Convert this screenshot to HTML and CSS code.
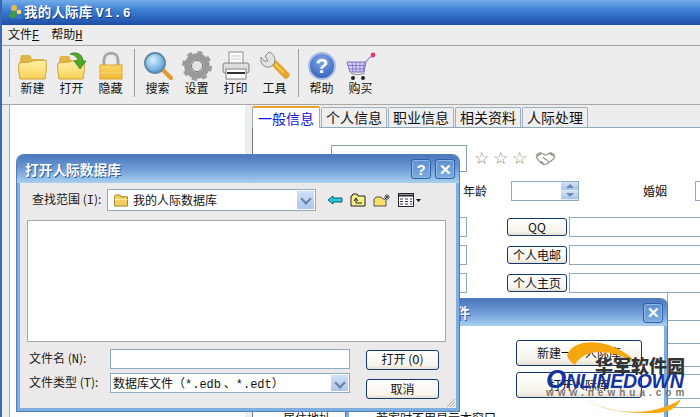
FILE: index.html
```html
<!DOCTYPE html>
<html lang="zh">
<head>
<meta charset="utf-8">
<title>我的人际库</title>
<link rel="stylesheet" href="styles.css">
</head>
<body>
<div class="screen">
  <header class="titlebar">
    <svg class="app-icon" viewBox="0 0 16 16" width="16" height="16"><circle cx="7" cy="4" r="3" fill="#e8b84a"/><path d="M2 14c0-5 2-7 5-7s4 2 4 4l-3 3z" fill="#3c9a48"/><circle cx="12" cy="8" r="2.4" fill="#f2d27a"/><path d="M8 15c0-3 2-5 4-5s3 2 3 5z" fill="#3f74c8"/></svg>
    <span class="app-title">我的人际库 <span class="mono">V1.6</span></span>
  </header>
  <nav class="menubar"><span>文件<u class="mono">F</u></span><span>帮助<u class="mono">H</u></span></nav>
  <div class="toolbar">
    <div class="sep"></div>
    <div class="tool"><svg viewBox="0 0 30 30" width="30" height="30"><path d="M2 8l1-4h9l2 4h12l1 2v4H2z" fill="#e2b646"/><path d="M2 28C1 22 0 16 1 12c6-1 10 0 14-2 4-1 9-1 13-.5 1 5 0 13-1 18.500z" fill="url(#fold)" stroke="#d0a236"/></svg><span>新建</span></div>
    <div class="tool"><svg viewBox="0 0 30 30" width="30" height="30"><path d="M2 9l1-4h9l2 4h10v6H2z" fill="#e2b646"/><path d="M2 28C1 22 0 16 1 12c6-1 10 0 14-2 4-1 8-1 12-.5 1 5 0 13-1 18.500z" fill="url(#fold)" stroke="#d0a236"/><path d="M13 3c6-3 13 0 13 7h3l-6 8-6-8h4c0-3-3-6-8-7z" fill="#4fa82e" stroke="#2f7d1e" stroke-width=".7"/></svg><span>打开</span></div>
    <div class="tool"><svg viewBox="0 0 30 30" width="30" height="30"><path d="M8 15V9c0-9 14-9 14 0v6" fill="none" stroke="#a8a8a8" stroke-width="3"/><rect x="4" y="14" width="22" height="14" fill="url(#lock)" stroke="#d9a632"/><path d="M4 22h22" stroke="#f8d674"/></svg><span>隐藏</span></div>
    <div class="sep"></div>
    <div class="tool"><svg viewBox="0 0 30 30" width="30" height="30"><path d="M19 18l9 9" stroke="#e39a2e" stroke-width="4" stroke-linecap="round"/><circle cx="12" cy="12" r="10" fill="url(#glass)" stroke="#5f8aa8" stroke-width="2"/></svg><span>搜索</span></div>
    <div class="tool"><svg viewBox="0 0 30 30" width="30" height="30"><circle cx="15" cy="15" r="9.500" fill="none" stroke="#999" stroke-width="6.500"/><circle cx="15" cy="15" r="13" fill="none" stroke="#9c9c9c" stroke-width="4" stroke-dasharray="5 5.200"/><circle cx="15" cy="15" r="5.500" fill="none" stroke="#6e6e6e"/><circle cx="15" cy="15" r="4.500" fill="#e4e4e4"/></svg><span>设置</span></div>
    <div class="tool"><svg viewBox="0 0 30 30" width="30" height="30"><rect x="8" y="1" width="14" height="13" fill="#fbfbfb" stroke="#8a8a8a"/><path d="M10 5h10M10 8h10" stroke="#ccc"/><rect x="2" y="12" width="26" height="10" rx="2" fill="#dedede" stroke="#808080"/><rect x="5" y="18" width="20" height="10" fill="#fff" stroke="#808080"/><rect x="6" y="21" width="18" height="2" fill="#333"/></svg><span>打印</span></div>
    <div class="tool"><svg viewBox="0 0 30 30" width="30" height="30"><path d="M15 13L26 24" stroke="#e3a52e" stroke-width="7" stroke-linecap="round"/><path d="M15 13L24 22" stroke="#f5c95a" stroke-width="2"/><path d="M9 1L5 5l3 5-4 0-3-4c-1 7 3 11 9 10l4-3c2-4 1-10-5-12z" fill="#e2e2e2" stroke="#8a8a8a"/></svg><span>工具</span></div>
    <div class="sep"></div>
    <div class="tool"><svg viewBox="0 0 30 30" width="30" height="30"><circle cx="15" cy="15" r="13" fill="url(#help)" stroke="#a8bfe0" stroke-width="2"/><text x="15" y="22" class="help-q">?</text></svg><span>帮助</span></div>
    <div class="tool"><svg viewBox="0 0 30 30" width="30" height="30"><path d="M1 11h19l-2 10H4z" fill="#d8d0f4" stroke="#7a6ac8"/><path d="M6 11l1 10M10 11v10M14 11v10M18 11l-1 10M2 14.500h18M3 18h16" stroke="#7a6ac8" stroke-width=".8"/><path d="M20 11l3-4 4-2" fill="none" stroke="#7a6ac8"/><path d="M5 22c2 2 11 2 14 0" fill="none" stroke="#8a8a8a"/><circle cx="7" cy="27" r="2" fill="#222"/><circle cx="17" cy="27" r="2" fill="#222"/><circle cx="27" cy="4" r="2.400" fill="#e8356a"/></svg><span>购买</span></div>
  </div>
  <main class="workspace">
    <aside class="tree"></aside>
    <section class="pane">
      <div class="tabs">
        <span class="tab active">一般信息</span><span class="tab">个人信息</span><span class="tab">职业信息</span><span class="tab">相关资料</span><span class="tab">人际处理</span>
      </div>
      <div class="form">
        <div class="row-name">
          <div class="field name"></div>
          <span class="stars"><span>☆</span><span>☆</span><span>☆</span></span>
          <svg viewBox="0 0 22 14" width="21" height="14"><path d="M1 5l6-4 4 2 4-2 6 4M1 5l4 5 4 3 4-1 5-4 3-3M8 5l4 3 3 3M6 9l3 3M1 3l5-3M21 3l-5-3" fill="none" stroke="#8f8f80" stroke-width="1.200"/></svg>
        </div>
        <div class="row-age">
          <span class="lbl">年龄</span>
          <div class="field spin"><span class="spin-btns"><i class="up"></i><i class="down"></i></span></div>
          <span class="lbl marry">婚姻</span>
          <div class="field rest"></div>
        </div>
        <div class="row-link"><div class="field left"></div><button class="btn small">QQ</button><div class="field rest"></div></div>
        <div class="row-link"><div class="field left"></div><button class="btn small">个人电邮</button><div class="field rest"></div></div>
        <div class="row-link"><div class="field left"></div><button class="btn small">个人主页</button><div class="field rest"></div></div>
        <div class="stack">
          <div class="field s1"></div>
          <div class="field s2"></div>
          <div class="field s3"></div>
          <div class="field s4"></div>
        </div>
        <div class="row-addr"><span class="lbl">居住地址</span></div>
      </div>
    </section>
  </main>

  <div class="dialog dlg-new">
    <div class="dlg-title"><span class="dlg-caption">打开人际库文件</span><span class="cap-btn">✕</span></div>
    <div class="new-body">
      <button class="btn wide">新建一个人际库</button>
      <button class="btn wide">打开人际库</button>
      <p class="hint">若家时不用显示本窗口</p>
    </div>
  </div>

  <div class="dialog dlg-open">
    <div class="dlg-title"><span class="dlg-caption">打开人际数据库</span><span class="cap-btn">?</span><span class="cap-btn">✕</span></div>
    <div class="open-body">
      <div class="look-row">
        <span class="flabel look">查找范围 (<span class="mono">I</span>):</span>
        <div class="field combo">
          <svg viewBox="0 0 16 14" width="16" height="13"><path d="M1 3l1-2h5l1 2h7v10H1z" fill="#f2cf62" stroke="#a07c20"/><path d="M1 6h14" stroke="#fff2b0"/></svg>
          <span>我的人际数据库</span>
          <span class="combo-arrow"></span>
        </div>
        <div class="nav-icons">
          <svg viewBox="0 0 16 14" width="16" height="14"><path d="M1 7l5-4v2h9v4H6v2z" fill="#27c8d8" stroke="#0c5a70"/></svg>
          <svg viewBox="0 0 16 14" width="16" height="14"><path d="M1 13V3h1l1-2h4l1 2h7v10z" fill="#f6f08a" stroke="#222"/><path d="M6 10h6M6 10V6M4 8l2-3 2 3" fill="none" stroke="#222"/></svg>
          <svg viewBox="0 0 18 14" width="18" height="14"><path d="M1 13V6l2-2h5l2 2h3v7z" fill="#f6e06a" stroke="#555"/><path d="M14 1v6M11 4h6M12 2l4 4M16 2l-4 4" stroke="#333" stroke-width=".8"/></svg>
          <svg viewBox="0 0 24 14" width="24" height="14"><rect x=".5" y=".5" width="15" height="13" fill="#fff" stroke="#222"/><path d="M1 2.500h14" stroke="#223" stroke-width="2"/><path d="M2 6h3M7 6h3M12 6h2M2 8.500h3M7 8.500h3M12 8.500h2M2 11h3M7 11h3M12 11h2" stroke="#335"/><path d="M18 6h5l-2.500 3z" fill="#111"/></svg>
        </div>
      </div>
      <div class="file-list"></div>
      <div class="bottom">
        <div class="file-fields">
          <div class="file-row"><span class="flabel">文件名 (<span class="mono">N</span>):</span><div class="field fname"></div></div>
          <div class="file-row"><span class="flabel">文件类型 (<span class="mono">T</span>):</span><div class="field fname ftype"><span>数据库文件（<span class="mono">*.edb</span> 、<span class="mono">*.edt</span>）</span><span class="combo-arrow"></span></div></div>
        </div>
        <div class="dlg-btns">
          <button class="btn act">打开 (<span class="mono">O</span>)</button>
          <button class="btn act">取消</button>
        </div>
      </div>
      <svg class="grip" viewBox="0 0 10 10" width="10" height="10"><path d="M9 1L1 9M9 4L4 9M9 7L7 9" stroke="#a8a8a8"/></svg>
    </div>
  </div>

  <div class="watermark">
    <svg class="wm-arcs" viewBox="0 0 140 72" width="140" height="72"><path d="M21 14C28-4 66-4 91 22 66 8 38 6 29 24c-3-2-7-5-8-10z" fill="#f6a70f"/><path d="M39 58c20 14 66 20 96 0-6 14-22 15-38 14-24 0-46-5-58-14z" fill="#f6a70f"/></svg>
    <span class="wm-cn">华军软件园</span>
    <span class="wm-en"><b>O</b>NLINEDOWN</span>
    <span class="wm-url">www.newhua.com</span>
  </div>
</div>

<svg class="defs" width="0" height="0">
  <defs>
    <linearGradient id="fold" x1="0" y1="0" x2="0" y2="1"><stop offset="0" stop-color="#fff2a8"/><stop offset="1" stop-color="#f8d058"/></linearGradient>
    <linearGradient id="lock" x1="0" y1="0" x2="0" y2="1"><stop offset="0" stop-color="#fbd766"/><stop offset="1" stop-color="#f0b636"/></linearGradient>
    <radialGradient id="glass" cx=".4" cy=".35" r=".7"><stop offset="0" stop-color="#d6f0fb"/><stop offset="1" stop-color="#4d9ad4"/></radialGradient>
    <radialGradient id="help" cx=".5" cy=".3" r=".8"><stop offset="0" stop-color="#7fa8ea"/><stop offset="1" stop-color="#2b56b4"/></radialGradient>
  </defs>
</svg>
</body>
</html>
```
FILE: styles.css
```css
* { box-sizing: border-box; }
html, body { margin: 0; padding: 0; }
body { width: 700px; height: 417px; overflow: hidden; font: 12px/1.2 "Noto Sans CJK SC", "Liberation Sans", sans-serif; color: #111; }
.screen { position: relative; width: 700px; height: 417px; overflow: hidden; background: #eeeded; border-left: 2px solid #3b68b8; display: flex; flex-direction: column; }
.mono { font-family: "Liberation Mono", monospace; }
.defs { position: absolute; }

.titlebar { height: 25px; margin-left: -2px; padding: 0 0 1px 7px; display: flex; align-items: center; gap: 1px; background: linear-gradient(#72ade9, #3f80d4 40%, #1e4ea6); flex: none; }
.app-title { font-size: 13.500px; font-weight: 700; color: #fff; text-shadow: 1px 1px 0 #123a80; letter-spacing: .2px; }
.app-title .mono { font-size: 13px; letter-spacing: 1.200px; }

.menubar { height: 21px; padding: 0 0 0 6px; display: flex; align-items: center; gap: 12px; border-bottom: 1px solid #a2a2a2; flex: none; }

.toolbar { height: 59px; padding: 2px 0 0 7px; display: flex; align-items: flex-start; border-bottom: 1px solid #a8a8a8; flex: none; }
.sep { width: 1px; height: 48px; margin: 1px 3px 0 0; background: #a0a0a0; }
.sep ~ .sep { margin-left: 4px; }
.tool { width: 39px; display: flex; flex-direction: column; align-items: center; }
.tool svg { margin-top: 3px; }
.tool span { margin-top: -1px; font-size: 12px; line-height: 15px; }
.help-q { font: 700 21px "Liberation Sans", sans-serif; fill: #fff; text-anchor: middle; }

.workspace { flex: 1; display: flex; padding-left: 7px; min-height: 0; }
.tree { width: 236px; background: #fff; border-left: 1px solid #b0b0b0; }
.pane { margin-left: 7px; flex: 1; display: flex; flex-direction: column; min-width: 0; }
.tabs { height: 22px; display: flex; align-items: flex-end; gap: 1px; flex: none; }
.tab { height: 20px; padding: 0 4px; font-size: 14px; line-height: 19px; background: #efeeee; border: 1px solid #9db0bc; border-bottom: 0; border-radius: 2px 2px 0 0; white-space: nowrap; }
.tab.active { height: 22px; padding: 0 5px 0 5px; background: #fff; color: #1414d8; border-top: 2px solid #eda42a; line-height: 20px; position: relative; z-index: 1; margin-bottom: -1px; }
.form { flex: 1; background: #fff; border-top: 1px solid #8eaaba; border-left: 1px solid #6a7e8a; padding-top: 17px; overflow: hidden; }

.field { height: 20px; background: #fff; border: 1px solid #8eabc0; flex: none; }
.row-name { height: 27px; margin-left: 78px; display: flex; align-items: center; gap: 7px; }
.field.name { width: 136px; height: 27px; border-color: #8aa0a0; }
.stars { display: flex; gap: 4px; width: 54px; font: 17px/1 "DejaVu Sans", sans-serif; color: #8f8f70; }
.stars span { width: 15px; text-align: center; }
.row-age { margin-top: 9px; margin-left: 210px; display: flex; align-items: center; height: 20px; }
.row-age .lbl { width: 48px; font-size: 12px; }
.field.spin { width: 68px; position: relative; }
.spin-btns { position: absolute; top: 0; right: 0; width: 17px; height: 18px; display: flex; flex-direction: column; background: #bcd2f2; }
.spin-btns i { flex: 1; position: relative; background: linear-gradient(#d4e2f6, #a8c4ec); border-bottom: 1px solid #dfe9f8; }
.spin-btns i::after { content: ""; position: absolute; left: 5px; width: 0; height: 0; border-left: 4px solid transparent; border-right: 4px solid transparent; }
.spin-btns .up::after { top: 2px; border-bottom: 4px solid #6f88ac; }
.spin-btns .down::after { top: 2px; border-top: 4px solid #6f88ac; }
.row-age .marry { margin-left: 64px; width: 52px; }
.field.rest { flex: 1; border-right: 0; min-width: 0; }
.row-link { height: 20px; margin-top: 8px; margin-left: 78px; display: flex; align-items: center; }
.row-age + .row-link { margin-top: 16px; }
.field.left { width: 136px; }
.btn { font: 12px/1 "Noto Sans CJK SC", "Liberation Sans", sans-serif; color: #111; padding: 0; background: linear-gradient(#fff, #f6f3ea 80%, #e6dfd0); border: 1px solid #123a70; border-radius: 3px; }
.btn.small { width: 60px; height: 18px; margin: 0 2px 0 40px; flex: none; }
.stack { margin-left: 414px; }
.stack .field { border-right: 0; }
.s1 { height: 28px; border-top: 0 !important; }
.s2 { height: 24px; margin-top: 22px; }
.s3 { height: 25px; margin-top: 7px; }
.s4 { height: 20px; margin-top: 8px; }
.row-addr { position: absolute; left: 281px; top: 411px; }
.row-addr .lbl { font-size: 12px; }

.dialog { position: absolute; background: #ebe9e9; border: 3px solid #7eaede; border-top: 0; border-radius: 7px 7px 0 0; box-shadow: 0 0 0 1px #4f7fc0; }
.dlg-title { height: 28px; margin: 0 -3px; padding: 0 4px 0 8px; display: flex; align-items: center; gap: 4px; border-radius: 7px 7px 0 0; background: linear-gradient(#4a76bb, #6f9cd6 50%, #a8d0f0); }
.dlg-caption { flex: 1; font-size: 13.700px; font-weight: 700; color: #fff; text-shadow: 1px 1px 0 #2b5a9c; white-space: nowrap; }
.cap-btn { width: 20px; height: 20px; display: flex; align-items: center; justify-content: center; font: 700 15px/1 "Liberation Sans", sans-serif; color: #fff; background: linear-gradient(#5f8fd0, #7cacdf); border: 1px solid #2f60a6; border-radius: 3px; box-shadow: inset 0 0 0 1px #8fb8e8; }

.dlg-open { left: 15px; top: 155px; width: 442px; height: 256px; }
.open-body { position: relative; padding: 6px 10px 0 7px; height: 225px; }
.flabel { font-size: 12px; color: #222; white-space: nowrap; }
.look-row { display: flex; align-items: center; height: 22px; }
.look { width: 80px; padding-left: 5px; }
.field.combo { width: 209px; height: 22px; padding: 0 0 0 5px; display: flex; align-items: center; gap: 4px; position: relative; }
.combo-arrow { position: absolute; right: 1px; top: 1px; bottom: 1px; width: 17px; background: linear-gradient(#d2e0f6, #aec6ee); }
.combo-arrow::after { content: ""; position: absolute; left: 5px; top: 4px; width: 6px; height: 6px; border-right: 2px solid #6a7ea0; border-bottom: 2px solid #6a7ea0; transform: rotate(45deg); }
.nav-icons { margin-left: 11px; display: flex; align-items: center; gap: 7px; }
.file-list { height: 122px; width: 419px; margin-top: 9px; background: #fff; border: 1px solid #a8a8a8; }
.bottom { display: flex; margin-top: 7px; }
.file-fields { display: flex; flex-direction: column; gap: 4px; }
.file-row { display: flex; align-items: center; height: 20px; padding-left: 2px; }
.file-row .flabel { width: 81px; }
.field.fname { width: 240px; position: relative; padding-left: 2px; line-height: 18px; }
.ftype { white-space: nowrap; }
.dlg-btns { margin: 1px 0 0 16px; display: flex; flex-direction: column; gap: 9px; }
.btn.act { width: 73px; height: 20px; }
.grip { position: absolute; right: 0; bottom: 0; }

.dlg-new { left: 344px; top: 299px; width: 321px; height: 130px; background: #fff; }
.dlg-new .dlg-title { height: 27px; padding-right: 4px; padding-left: 28px; }
.new-body { padding: 14px 0 0 167px; position: relative; }
.btn.wide { display: block; width: 126px; height: 26px; margin-bottom: 6px; }
.hint { margin: 0; position: absolute; left: 27px; top: 85px; font-size: 12px; white-space: nowrap; }

.watermark { position: absolute; left: 544px; top: 341px; width: 143px; height: 74px; }
.wm-arcs { position: absolute; left: 0; top: 0; }
.wm-cn { position: absolute; left: 49px; top: 14px; font-size: 18px; line-height: 20px; font-weight: 900; color: #333; white-space: nowrap; }
.wm-en { position: absolute; left: 0; top: 26px; font: italic 700 19.500px/24px "Liberation Sans", sans-serif; color: #14339c; white-space: nowrap; letter-spacing: -.3px; }
.wm-en b { font-size: 26px; }
.wm-url { position: absolute; left: 0; top: 46px; font: 700 10px/12px "Liberation Sans", sans-serif; color: #777; letter-spacing: 4px; white-space: nowrap; }
```
